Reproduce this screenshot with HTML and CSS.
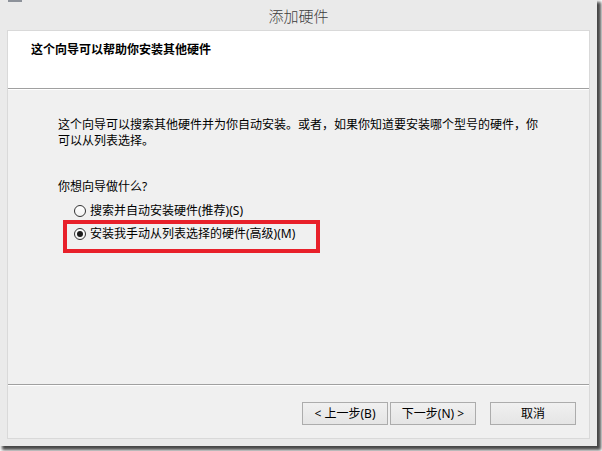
FILE: index.html
```html
<!DOCTYPE html>
<html lang="zh-CN">
<head>
<meta charset="utf-8">
<title>添加硬件</title>
<link rel="stylesheet" href="styles.css">
</head>
<body>
<div class="window">
  <div class="app-icon"></div>
  <div class="titlebar">添加硬件</div>
  <div class="client">
    <div class="header">
      <div class="header-title">这个向导可以帮助你安装其他硬件</div>
    </div>
    <div class="content">
      <p class="intro">这个向导可以搜索其他硬件并为你自动安装。或者，如果你知道要安装哪个型号的硬件，你<br>可以从列表选择。</p>
      <p class="question">你想向导做什么?</p>
      <div class="options">
        <label class="option"><span class="radio"></span><span>搜索并自动安装硬件(推荐)(S)</span></label>
        <label class="option"><span class="radio checked"></span><span>安装我手动从列表选择的硬件(高级)(M)</span></label>
      </div>
    </div>
    <div class="buttons">
      <div class="btn">&lt; 上一步(B)</div>
      <div class="btn">下一步(N) &gt;</div>
      <div class="btn cancel">取消</div>
    </div>
  </div>
  <div class="highlight"></div>
</div>
</body>
</html>
```

FILE: styles.css
```css
html, body {
  margin: 0;
  padding: 0;
  background: #ffffff;
}

body {
  width: 602px;
  height: 451px;
  overflow: hidden;
  font-family: "Noto Sans", "Noto Sans CJK SC", sans-serif;
  font-size: 12px;
  color: #000;
}

.window {
  position: relative;
  box-sizing: border-box;
  width: 597px;
  height: 446px;
  padding: 0 7px 7px 7px;
  background: #eaeaea;
  display: flex;
  flex-direction: column;
  box-shadow: 3px 3px 3px 1px rgba(0, 0, 0, 0.72);
}

.app-icon {
  position: absolute;
  left: 8px;
  top: 0;
  width: 14px;
  height: 2px;
  background: #8d929a;
}

.titlebar {
  height: 30px;
  box-sizing: border-box;
  padding-top: 6px;
  line-height: 20px;
  text-align: center;
  font-size: 15px;
  color: #3c3c3c;
  font-family: "Noto Sans CJK SC", sans-serif;
  font-weight: 300;
}

.client {
  flex: 1;
  display: flex;
  flex-direction: column;
  border: 1px solid #d9d9d9;
  background: #f0f0f0;
}

.header {
  height: 58px;
  box-sizing: border-box;
  background: #ffffff;
  border-bottom: 1px solid #a0a0a0;
  padding: 10px 0 0 23px;
}

.header-title {
  font-weight: bold;
  line-height: 16px;
  font-family: "Noto Sans CJK SC", sans-serif;
}

.content {
  flex: 1;
  border-top: 1px solid #ffffff;
  border-bottom: 1px solid #a0a0a0;
  padding: 27px 0 0 50px;
}

.intro {
  margin: 0;
  line-height: 16px;
}

.question {
  margin: 30px 0 0 0;
  line-height: 16px;
}

.options {
  margin-top: 8px;
  display: flex;
  flex-direction: column;
  gap: 7px;
}

.option {
  display: flex;
  align-items: center;
  gap: 4px;
  line-height: 16px;
  height: 16px;
  padding-left: 16px;
}

.radio {
  box-sizing: border-box;
  width: 12px;
  height: 12px;
  border-radius: 50%;
  border: 1px solid #333333;
  background: linear-gradient(#ffffff, #f2f2f2);
  display: flex;
  align-items: center;
  justify-content: center;
}

.radio.checked::after {
  content: "";
  width: 6px;
  height: 6px;
  border-radius: 50%;
  background: #1a1a1a;
}

.buttons {
  height: 53px;
  box-sizing: border-box;
  border-top: 1px solid #ffffff;
  display: flex;
  justify-content: flex-end;
  align-items: flex-start;
  padding: 16px 13px 0 0;
  gap: 2px;
}

.btn {
  box-sizing: border-box;
  width: 86px;
  height: 23px;
  border: 1px solid #acacac;
  background: linear-gradient(#f0f0f0, #e5e5e5);
  line-height: 21px;
  text-align: center;
  color: #000;
}

.btn.cancel {
  margin-left: 12px;
}

.highlight {
  position: absolute;
  left: 63px;
  top: 220px;
  width: 257px;
  height: 33px;
  box-sizing: border-box;
  border: 4px solid #e8202a;
}
```
